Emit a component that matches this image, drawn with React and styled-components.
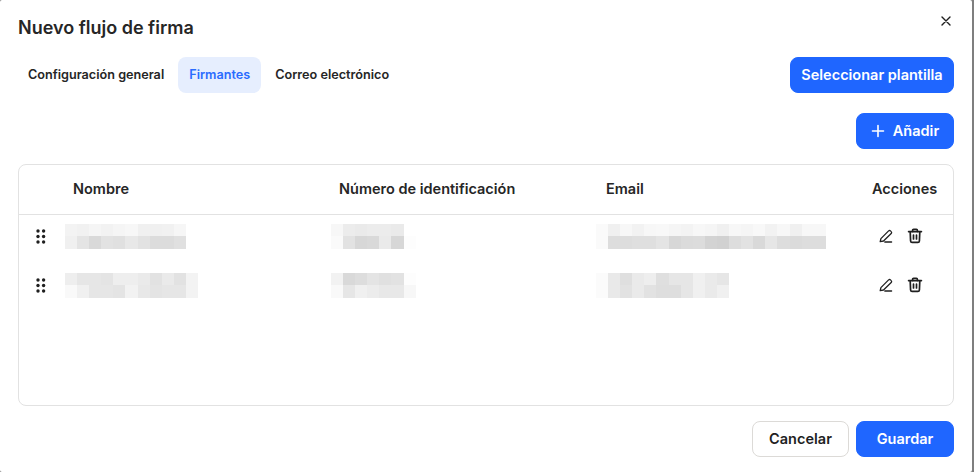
import React from "react";
import styled, { createGlobalStyle } from "styled-components";

const Global = createGlobalStyle`
  html, body { margin: 0; padding: 0; background: #7f7f7f; }
  body { font-family: Inter, "Liberation Sans", sans-serif; color: #1f1f1f; }
  * { box-sizing: border-box; }
`;

const Modal = styled.div`
  position: relative;
  width: 972px;
  height: 472px;
  background: #fff;
  border-radius: 2px;
  padding: 0 18px;
  display: flex;
  flex-direction: column;
`;
const Title = styled.h2`
  margin: 0;
  height: 57px;
  padding-top: 17px;
  font-size: 18px;
  line-height: 22px;
  font-weight: 600;
  color: #262626;
`;
const Close = styled.button`
  position: absolute;
  top: 14px;
  right: 19px;
  width: 14px;
  height: 14px;
  padding: 0;
  border: 0;
  background: none;
  display: flex;
  color: #1f1f1f;
`;
const TabRow = styled.div`
  display: flex;
  align-items: center;
  justify-content: space-between;
  height: 36px;
`;
const Tabs = styled.div`
  display: flex;
  gap: 3px;
`;
const Tab = styled.div`
  height: 36px;
  padding: 0 11px 1px;
  display: flex;
  align-items: center;
  font-size: 12.65px;
  font-weight: 600;
  border-radius: 8px;
  margin-left: ${(p) => (p.$first ? "-1px" : "0")};
  color: ${(p) => (p.$active ? "#2a6cff" : "#262626")};
  background: ${(p) => (p.$active ? "#e6eefe" : "transparent")};
`;
const Button = styled.button`
  height: 36px;
  border-radius: 8px;
  padding: 0 0 1px;
  font-family: inherit;
  font-size: 14.5px;
  font-weight: 600;
  display: inline-flex;
  align-items: center;
  justify-content: center;
  gap: 8px;
  width: ${(p) => p.$w}px;
  border: 1px solid ${(p) => (p.$secondary ? "#dcdad7" : "#1f66ff")};
  background: ${(p) => (p.$secondary ? "#fff" : "#1f66ff")};
  color: ${(p) => (p.$secondary ? "#1f1f1f" : "#fff")};
`;
const AddRow = styled.div`
  display: flex;
  justify-content: flex-end;
  margin-top: 20px;
`;
const Table = styled.div`
  margin-top: 15px;
  height: 242px;
  border: 1px solid #e2e2e2;
  border-radius: 8px;
`;
const cols = "46px 266px 265px 276px 1fr";
const Head = styled.div`
  display: grid;
  grid-template-columns: ${cols};
  align-items: center;
  height: 50px;
  padding-bottom: 2px;
  border-bottom: 1px solid #e2e2e2;
  font-size: 14.5px;
  font-weight: 600;
  color: #262626;
`;
const HeadCell = styled.div`
  padding-left: ${(p) => p.$pad}px;
  white-space: nowrap;
`;
const Body = styled.div`
  padding-top: 9px;
  display: flex;
  flex-direction: column;
  gap: 25px;
`;
const Row = styled.div`
  display: grid;
  grid-template-columns: ${cols};
  align-items: center;
  height: 24px;
`;
const Handle = styled.div`
  display: flex;
  padding-left: 17px;
  color: #1f1f1f;
`;
const Pixels = styled.div`
  display: flex;
  flex-direction: column;
`;
const PixelRow = styled.div`
  display: flex;
`;
const Pixel = styled.span`
  width: 12.1px;
  height: 12.3px;
  background: ${(p) => p.$c};
`;
const Actions = styled.div`
  display: flex;
  align-items: center;
  gap: 13px;
  padding-left: 6px;
  color: #1f1f1f;
`;
const Footer = styled.div`
  display: flex;
  justify-content: flex-end;
  gap: 7px;
  margin-top: 15px;
`;

const hex = (s) => s.split(",").map((v) => `#${v}${v}${v}`);

const Blur = ({ top, bottom }) => (
  <Pixels>
    {[top, bottom].map((r, i) => (
      <PixelRow key={i}>
        {hex(r).map((c, j) => (
          <Pixel key={j} $c={c} />
        ))}
      </PixelRow>
    ))}
  </Pixels>
);

const Grip = () => (
  <svg width="10" height="15" viewBox="0 0 10 15" fill="currentColor">
    {[2, 7.5, 13].map((y) =>
      [2, 7.6].map((x) => <circle key={`${x}${y}`} cx={x} cy={y} r="1.7" />)
    )}
  </svg>
);
const Pencil = () => (
  <svg width="16" height="16" viewBox="0 0 16 16" fill="none" stroke="currentColor" strokeWidth="1.3" strokeLinejoin="round" strokeLinecap="round">
    <path d="M2.2 13.6 L2.9 10.6 L10.6 2.9 a1.3 1.3 0 0 1 1.9 0 l0.7 0.7 a1.3 1.3 0 0 1 0 1.9 L5.5 13 Z" />
    <path d="M6.8 14 H13.6" />
  </svg>
);
const Trash = () => (
  <svg width="16" height="16" viewBox="0 0 16 16" fill="none" stroke="currentColor" strokeWidth="1.7" strokeLinecap="round" strokeLinejoin="round">
    <path d="M1.6 3.6 H14.4" />
    <path d="M5.6 3.4 V2.4 a1 1 0 0 1 1-1 h2.8 a1 1 0 0 1 1 1 V3.4" />
    <path d="M3.2 3.8 L3.6 13 a1.5 1.5 0 0 0 1.5 1.4 h5.8 a1.5 1.5 0 0 0 1.5-1.4 L12.8 3.8" />
    <path d="M6.5 7 V11" />
    <path d="M9.5 7 V11" />
  </svg>
);

const rows = [
  {
    name: ["f3,f1,f5,f2,f5,f7,f0,f0,f1,f6", "f0,e4,d9,e2,e0,e8,e2,dc,dc,e0"],
    id: ["f7,ec,ea,ec,ec,ea,ff", "fa,e2,d7,d9,ea,d7,fd"],
    email: [
      "fa,f0,f7,f2,f7,f8,f5,f3,f7,f5,f0,f7,f5,f8,f2,f7,f0,f7,f7",
      "fa,dd,dd,df,df,e4,d7,db,dc,d3,d1,dd,e2,d9,e6,dd,db,dd,dd",
    ],
  },
  {
    name: ["ee,e6,e6,e4,ee,ee,ea,e2,ea,e2,f3", "f9,f0,e6,e6,e4,f2,e8,e4,e6,e6,f3"],
    id: ["f2,d9,dd,e4,e0,e2,fd", "f9,e6,f0,ec,e8,e8,f7"],
    email: ["fb,e9,df,ea,ee,df,e6,e6,f0,ea,e6", "fb,e9,e2,ea,e2,de,de,e6,f0,ea,f0"],
  },
];

export default function App() {
  return (
    <>
      <Global />
      <Modal>
        <Title>Nuevo flujo de firma</Title>
        <Close aria-label="Cerrar">
          <svg width="14" height="14" viewBox="0 0 14 14" fill="none" stroke="currentColor" strokeWidth="1.4" strokeLinecap="round">
            <path d="M3 3 L11 11 M11 3 L3 11" />
          </svg>
        </Close>
        <TabRow>
          <Tabs>
            <Tab $first>Configuración general</Tab>
            <Tab $active>Firmantes</Tab>
            <Tab>Correo electrónico</Tab>
          </Tabs>
          <Button $w={164}>Seleccionar plantilla</Button>
        </TabRow>
        <AddRow>
          <Button $w={98}>
            <svg width="14" height="14" viewBox="0 0 14 14" fill="none" stroke="currentColor" strokeWidth="1.6" strokeLinecap="round">
              <path d="M7 1.5 V12.5 M1.5 7 H12.5" />
            </svg>
            Añadir
          </Button>
        </AddRow>
        <Table>
          <Head>
            <span />
            <HeadCell $pad={8}>Nombre</HeadCell>
            <HeadCell $pad={8}>Número de identificación</HeadCell>
            <HeadCell $pad={10}>Email</HeadCell>
            <HeadCell $pad={0}>Acciones</HeadCell>
          </Head>
          <Body>
            {rows.map((r, i) => (
              <Row key={i}>
                <Handle>
                  <Grip />
                </Handle>
                <Blur top={r.name[0]} bottom={r.name[1]} />
                <Blur top={r.id[0]} bottom={r.id[1]} />
                <Blur top={r.email[0]} bottom={r.email[1]} />
                <Actions>
                  <Pencil />
                  <Trash />
                </Actions>
              </Row>
            ))}
          </Body>
        </Table>
        <Footer>
          <Button $secondary $w={97}>Cancelar</Button>
          <Button $w={98}>Guardar</Button>
        </Footer>
      </Modal>
    </>
  );
}
